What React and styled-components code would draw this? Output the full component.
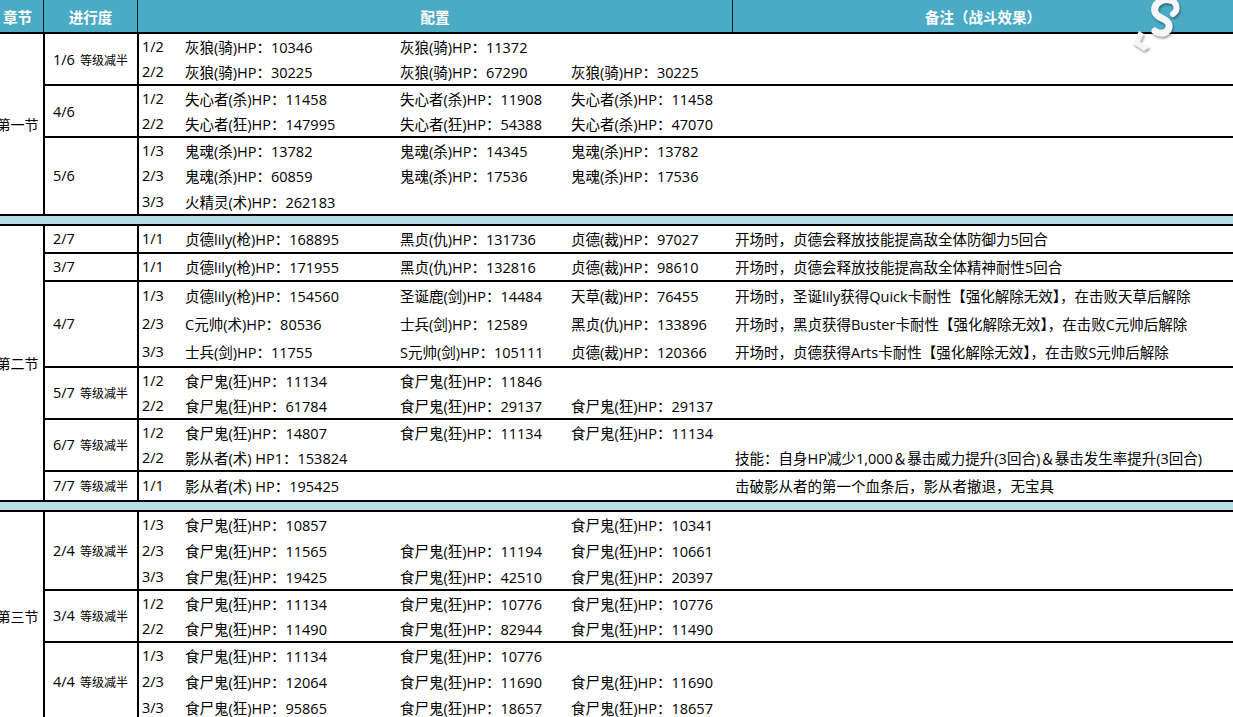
import React from "react";
import styled, { createGlobalStyle } from "styled-components";

const Global = createGlobalStyle`
  html, body { margin: 0; padding: 0; overflow: hidden; background: #fff; }
  body { font-family: "Open Sans", "Noto Sans CJK SC", sans-serif; color: #000; }
`;

const Page = styled.div`
  position: relative;
  width: 1233px;
  height: 717px;
  overflow: hidden;
`;

const Table = styled.div`
  margin-left: -8px;
  width: 1241px;
  display: flex;
  flex-direction: column;
`;

const Header = styled.div`
  display: flex;
  height: 32px;
  background: #4babc5;
  border-bottom: 2px solid #000;
  color: #fff;
  font-family: "Noto Sans CJK SC", sans-serif;
  font-weight: 700;
  font-size: 14.5px;
`;

const HeadCell = styled.div`
  width: ${(p) => (p.$w ? `${p.$w}px` : "auto")};
  flex: ${(p) => (p.$w ? "none" : "1")};
  display: flex;
  align-items: center;
  justify-content: center;
  border-right: ${(p) => (p.$last ? "none" : "1px solid #0c1c22")};
  box-sizing: border-box;
`;

const Section = styled.div`
  display: flex;
`;

const Chapter = styled.div`
  width: 53px;
  flex: none;
  box-sizing: border-box;
  border-right: 2px solid #000;
  display: flex;
  align-items: center;
  justify-content: center;
  font-family: "Noto Sans CJK SC", sans-serif;
  font-size: 14px;
  white-space: nowrap;
`;

const Groups = styled.div`
  flex: 1;
  display: flex;
  flex-direction: column;
`;

const Group = styled.div`
  display: flex;
  border-top: ${(p) => (p.$first ? "none" : "2px solid #000")};
`;

const Progress = styled.div`
  width: 94px;
  flex: none;
  box-sizing: border-box;
  border-right: 2px solid #000;
  display: flex;
  align-items: center;
  padding-left: 8px;
  font-size: 14.5px;
  white-space: nowrap;
`;

const Note = styled.span`
  font-family: "Noto Sans CJK SC", sans-serif;
  font-size: 12px;
  margin-left: 5px;
`;

const Lines = styled.div`
  flex: 1;
  display: flex;
  flex-direction: column;
`;

const Line = styled.div`
  height: ${(p) => p.$h}px;
  display: grid;
  grid-template-columns: 46px 215px 171px 162px 1fr;
  align-items: center;
  font-size: 14.5px;
  white-space: nowrap;
`;

const Wave = styled.span`
  padding-left: 3px;
`;

const Enemy = styled.span``;

const Remark = styled.span`
  padding-left: 2px;
  font-size: 14.5px;
`;

const Band = styled.div`
  height: 8px;
  background: #b7dde8;
  border-top: 2px solid #000;
  border-bottom: 2px solid #000;
`;

const Watermark = styled.svg`
  position: absolute;
  left: 1122px;
  top: -4px;
  width: 70px;
  height: 64px;
  filter: drop-shadow(1px 2px 1px rgba(0, 0, 0, 0.35));
`;

const sections = [
  {
    name: "第一节",
    groups: [
      {
        p: "1/6", n: "等级减半", h: 50,
        rows: [
          ["1/2", "灰狼(骑)HP：10346", "灰狼(骑)HP：11372", ""],
          ["2/2", "灰狼(骑)HP：30225", "灰狼(骑)HP：67290", "灰狼(骑)HP：30225"],
        ],
      },
      {
        p: "4/6", h: 50,
        rows: [
          ["1/2", "失心者(杀)HP：11458", "失心者(杀)HP：11908", "失心者(杀)HP：11458"],
          ["2/2", "失心者(狂)HP：147995", "失心者(狂)HP：54388", "失心者(杀)HP：47070"],
        ],
      },
      {
        p: "5/6", h: 76,
        rows: [
          ["1/3", "鬼魂(杀)HP：13782", "鬼魂(杀)HP：14345", "鬼魂(杀)HP：13782"],
          ["2/3", "鬼魂(杀)HP：60859", "鬼魂(杀)HP：17536", "鬼魂(杀)HP：17536"],
          ["3/3", "火精灵(术)HP：262183", "", ""],
        ],
      },
    ],
  },
  {
    name: "第二节",
    groups: [
      {
        p: "2/7", h: 26,
        rows: [["1/1", "贞德lily(枪)HP：168895", "黑贞(仇)HP：131736", "贞德(裁)HP：97027", "开场时，贞德会释放技能提高敌全体防御力5回合"]],
      },
      {
        p: "3/7", h: 26,
        rows: [["1/1", "贞德lily(枪)HP：171955", "黑贞(仇)HP：132816", "贞德(裁)HP：98610", "开场时，贞德会释放技能提高敌全体精神耐性5回合"]],
      },
      {
        p: "4/7", h: 84,
        rows: [
          ["1/3", "贞德lily(枪)HP：154560", "圣诞鹿(剑)HP：14484", "天草(裁)HP：76455", "开场时，圣诞lily获得Quick卡耐性【强化解除无效】，在击败天草后解除"],
          ["2/3", "C元帅(术)HP：80536", "士兵(剑)HP：12589", "黑贞(仇)HP：133896", "开场时，黑贞获得Buster卡耐性【强化解除无效】，在击败C元帅后解除"],
          ["3/3", "士兵(剑)HP：11755", "S元帅(剑)HP：105111", "贞德(裁)HP：120366", "开场时，贞德获得Arts卡耐性【强化解除无效】，在击败S元帅后解除"],
        ],
      },
      {
        p: "5/7", n: "等级减半", h: 50,
        rows: [
          ["1/2", "食尸鬼(狂)HP：11134", "食尸鬼(狂)HP：11846", ""],
          ["2/2", "食尸鬼(狂)HP：61784", "食尸鬼(狂)HP：29137", "食尸鬼(狂)HP：29137"],
        ],
      },
      {
        p: "6/7", n: "等级减半", h: 50,
        rows: [
          ["1/2", "食尸鬼(狂)HP：14807", "食尸鬼(狂)HP：11134", "食尸鬼(狂)HP：11134"],
          ["2/2", "影从者(术) HP1：153824", "", "", "技能：自身HP减少1,000＆暴击威力提升(3回合)＆暴击发生率提升(3回合)"],
        ],
      },
      {
        p: "7/7", n: "等级减半", h: 28,
        rows: [["1/1", "影从者(术) HP：195425", "", "", "击破影从者的第一个血条后，影从者撤退，无宝具"]],
      },
    ],
  },
  {
    name: "第三节",
    groups: [
      {
        p: "2/4", n: "等级减半", h: 77,
        rows: [
          ["1/3", "食尸鬼(狂)HP：10857", "", "食尸鬼(狂)HP：10341"],
          ["2/3", "食尸鬼(狂)HP：11565", "食尸鬼(狂)HP：11194", "食尸鬼(狂)HP：10661"],
          ["3/3", "食尸鬼(狂)HP：19425", "食尸鬼(狂)HP：42510", "食尸鬼(狂)HP：20397"],
        ],
      },
      {
        p: "3/4", n: "等级减半", h: 50,
        rows: [
          ["1/2", "食尸鬼(狂)HP：11134", "食尸鬼(狂)HP：10776", "食尸鬼(狂)HP：10776"],
          ["2/2", "食尸鬼(狂)HP：11490", "食尸鬼(狂)HP：82944", "食尸鬼(狂)HP：11490"],
        ],
      },
      {
        p: "4/4", n: "等级减半", h: 78,
        rows: [
          ["1/3", "食尸鬼(狂)HP：11134", "食尸鬼(狂)HP：10776", ""],
          ["2/3", "食尸鬼(狂)HP：12064", "食尸鬼(狂)HP：11690", "食尸鬼(狂)HP：11690"],
          ["3/3", "食尸鬼(狂)HP：95865", "食尸鬼(狂)HP：18657", "食尸鬼(狂)HP：18657"],
        ],
      },
    ],
  },
];

export default function App() {
  return (
    <Page>
      <Global />
      <Table>
        <Header>
          <HeadCell $w={52}>章节</HeadCell>
          <HeadCell $w={94}>进行度</HeadCell>
          <HeadCell $w={595}>配置</HeadCell>
          <HeadCell $last>备注（战斗效果）</HeadCell>
        </Header>
        {sections.map((s, si) => (
          <React.Fragment key={s.name}>
            {si > 0 && <Band />}
            <Section>
              <Chapter>{s.name}</Chapter>
              <Groups>
                {s.groups.map((g, gi) => (
                  <Group key={g.p} $first={gi === 0}>
                    <Progress>
                      {g.p}
                      {g.n && <Note>{g.n}</Note>}
                    </Progress>
                    <Lines>
                      {g.rows.map((r, ri) => (
                        <Line key={ri} $h={g.h / g.rows.length}>
                          <Wave>{r[0]}</Wave>
                          <Enemy>{r[1]}</Enemy>
                          <Enemy>{r[2]}</Enemy>
                          <Enemy>{r[3]}</Enemy>
                          <Remark>{r[4] || ""}</Remark>
                        </Line>
                      ))}
                    </Lines>
                  </Group>
                ))}
              </Groups>
            </Section>
          </React.Fragment>
        ))}
      </Table>
      <Watermark viewBox="0 0 70 64">
        <path
          d="M48 4 C40 2 31 8 33 16 C35 23 46 22 47 29 C48 36 40 40 33 35"
          fill="none"
          stroke="#f4f6f7"
          strokeWidth="7"
          strokeLinecap="round"
        />
        <path
          d="M48 4 C55 6 57 14 51 18"
          fill="none"
          stroke="#f4f6f7"
          strokeWidth="6"
          strokeLinecap="round"
        />
        <path
          d="M17 35 L11 48 L22 55 L28 51 L18 46 L22 38 Z"
          fill="#f4f6f7"
        />
      </Watermark>
    </Page>
  );
}
